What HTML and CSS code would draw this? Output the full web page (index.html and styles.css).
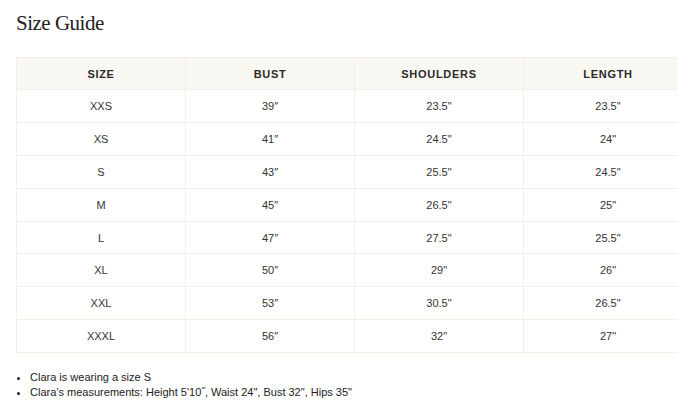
FILE: index.html
```html
<!DOCTYPE html>
<html lang="en">
<head>
<meta charset="utf-8">
<title>Size Guide</title>
<link rel="stylesheet" href="styles.css">
</head>
<body>
<div class="page">
  <h1 class="title">Size Guide</h1>
  <div class="table-wrap">
    <table class="guide">
      <thead>
        <tr><th>SIZE</th><th>BUST</th><th>SHOULDERS</th><th>LENGTH</th></tr>
      </thead>
      <tbody>
        <tr><td>XXS</td><td>39″</td><td>23.5"</td><td>23.5"</td></tr>
        <tr><td>XS</td><td>41″</td><td>24.5"</td><td>24"</td></tr>
        <tr><td>S</td><td>43″</td><td>25.5"</td><td>24.5"</td></tr>
        <tr><td>M</td><td>45″</td><td>26.5"</td><td>25"</td></tr>
        <tr><td>L</td><td>47″</td><td>27.5"</td><td>25.5"</td></tr>
        <tr><td>XL</td><td>50″</td><td>29"</td><td>26"</td></tr>
        <tr><td>XXL</td><td>53″</td><td>30.5"</td><td>26.5"</td></tr>
        <tr><td>XXXL</td><td>56″</td><td>32"</td><td>27"</td></tr>
      </tbody>
    </table>
  </div>
  <ul class="notes">
    <li>Clara is wearing a size S</li>
    <li>Clara’s measurements: Height 5'10˝, Waist 24", Bust 32", Hips 35"</li>
  </ul>
</div>
</body>
</html>
```
FILE: styles.css
```css
html, body {
  margin: 0;
  padding: 0;
  background: #ffffff;
  overflow: hidden;
}
.page {
  padding: 11px 0 0 16px;
  font-family: "Liberation Sans", Arial, sans-serif;
  color: #333333;
}
.title {
  margin: 0;
  font-family: "Liberation Serif", "Times New Roman", serif;
  font-weight: normal;
  font-size: 21px;
  line-height: 25px;
  letter-spacing: -0.5px;
  color: #222222;
}
.table-wrap {
  margin-top: 21px;
  overflow: hidden;
}
.guide {
  width: 677px;
  border-collapse: collapse;
  table-layout: fixed;
}
.guide th,
.guide td {
  border: 1.5px solid #f4f0e7;
  text-align: center;
  padding: 0;
}
.guide th {
  height: 31px;
  background: #faf8f3;
  font-size: 11px;
  font-weight: bold;
  letter-spacing: 0.7px;
  color: #2a2a2a;
}
.guide td {
  height: 31.9px;
  font-size: 11px;
  color: #333333;
}
.notes {
  margin: 17px 0 0 0;
  padding-left: 14px;
  font-size: 11px;
  line-height: 15px;
  color: #222222;
}
```
